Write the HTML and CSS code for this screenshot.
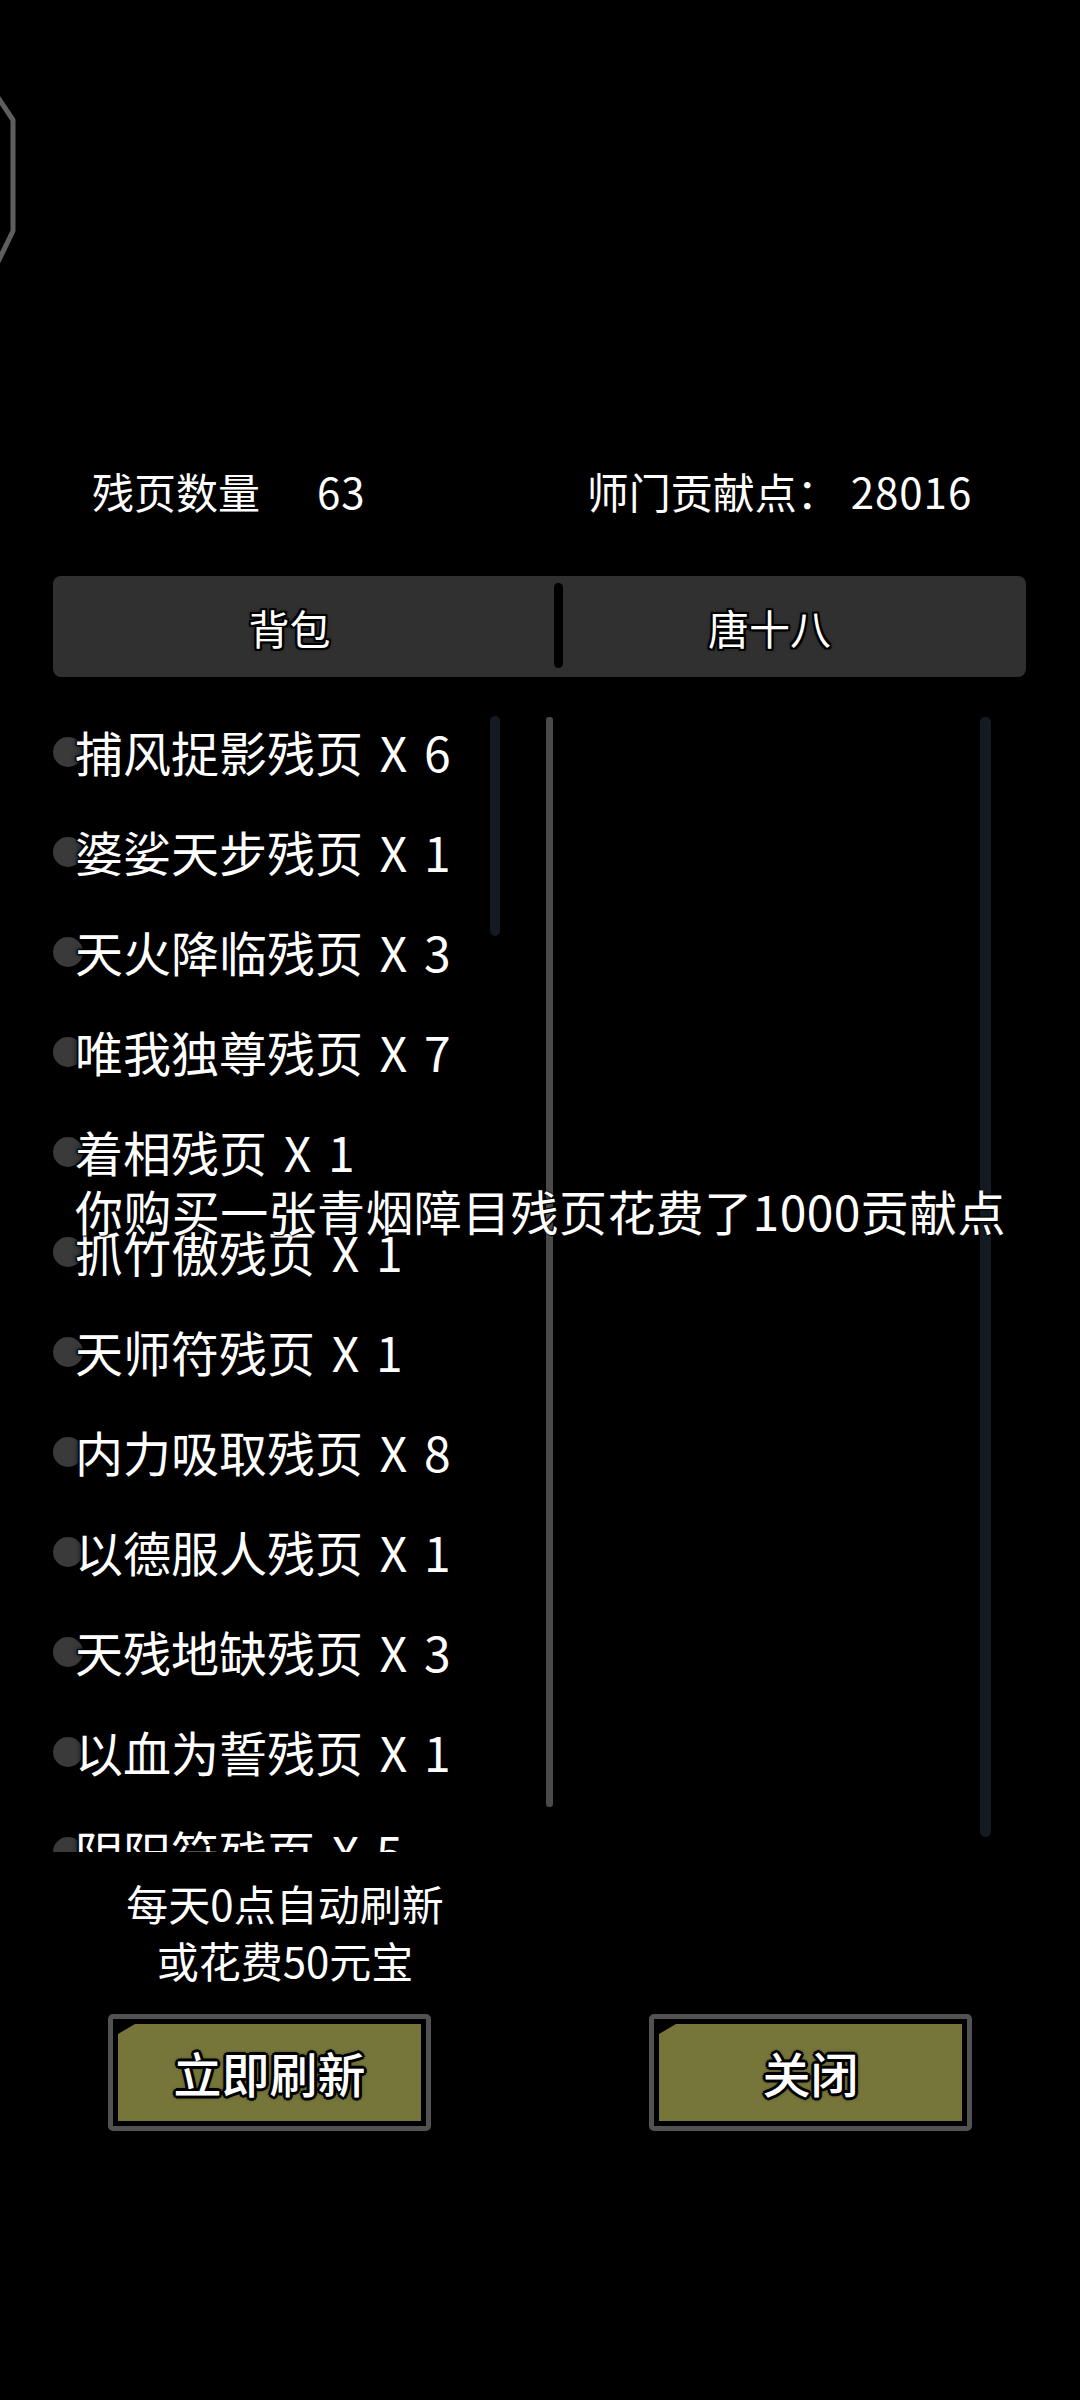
FILE: index.html
```html
<!DOCTYPE html>
<html lang="zh-CN">
<head>
<meta charset="utf-8">
<title>残页商店</title>
<link rel="stylesheet" href="styles.css">
</head>
<body>
<div class="screen">
  <svg class="deco" width="24" height="172" viewBox="0 0 24 172">
    <polyline points="-3,1 13,25 13,136 -3,169" fill="none" stroke="#5e5e5e" stroke-width="5" stroke-linejoin="round"/>
  </svg>

  <div class="stats">
    <span class="stat-label">残页数量</span>
    <span class="stat-value first">63</span>
    <span class="stat-label second">师门贡献点：</span>
    <span class="stat-value">28016</span>
  </div>

  <div class="tabs">
    <div class="tab tab-left"><span class="outline">背包</span></div>
    <div class="tab-divider"></div>
    <div class="tab tab-right"><span class="outline">唐十八</span></div>
  </div>

  <div class="panel">
    <div class="list">
      <div class="item"><span class="dot"></span><span class="name">捕风捉影残页 X 6</span></div>
      <div class="item"><span class="dot"></span><span class="name">婆娑天步残页 X 1</span></div>
      <div class="item"><span class="dot"></span><span class="name">天火降临残页 X 3</span></div>
      <div class="item"><span class="dot"></span><span class="name">唯我独尊残页 X 7</span></div>
      <div class="item"><span class="dot"></span><span class="name">着相残页 X 1</span></div>
      <div class="item"><span class="dot"></span><span class="name">抓竹傲残页 X 1</span></div>
      <div class="item"><span class="dot"></span><span class="name">天师符残页 X 1</span></div>
      <div class="item"><span class="dot"></span><span class="name">内力吸取残页 X 8</span></div>
      <div class="item"><span class="dot"></span><span class="name">以德服人残页 X 1</span></div>
      <div class="item"><span class="dot"></span><span class="name">天残地缺残页 X 3</span></div>
      <div class="item"><span class="dot"></span><span class="name">以血为誓残页 X 1</span></div>
      <div class="item"><span class="dot"></span><span class="name">阴阳符残页 X 5</span></div>
    </div>
    <div class="thumb"></div>
    <div class="separator"></div>
    <div class="right-pane"></div>
    <div class="track"></div>
  </div>

  <div class="info">
    <div>每天0点自动刷新</div>
    <div>或花费50元宝</div>
  </div>

  <div class="buttons">
    <div class="btn"><div class="btn-face"><span class="btn-text">立即刷新</span></div></div>
    <div class="btn"><div class="btn-face"><span class="btn-text">关闭</span></div></div>
  </div>

  <div class="toast">你购买一张青烟障目残页花费了1000贡献点</div>
</div>
</body>
</html>
```

FILE: styles.css
```css
html, body {
  margin: 0;
  padding: 0;
  background: #000;
}

.screen {
  position: relative;
  width: 1080px;
  height: 2400px;
  overflow: hidden;
  background: #000;
  color: #fff;
  font-family: "Noto Sans CJK SC", "Noto Sans", sans-serif;
}

.deco {
  display: block;
  margin-top: 95px;
}

/* stats row */
.stats {
  display: flex;
  align-items: center;
  margin-top: 199px;
  padding-left: 92px;
  height: 50px;
  line-height: 50px;
  font-size: 42px;
  text-shadow: 0 0 2px #000, 1px 1px 1px #000, -1px -1px 1px #000;
}

.stat-value.first {
  margin-left: 57px;
}

.stat-label.second {
  margin-left: 221px;
}

.stat-value {
  margin-left: 12px;
  letter-spacing: 1px;
}

/* tabs */
.tabs {
  display: flex;
  align-items: center;
  margin: 60px 0 0 53px;
  width: 973px;
  height: 101px;
  background: #303030;
  border-radius: 8px;
}

.tab {
  display: flex;
  align-items: center;
  justify-content: center;
  height: 100%;
  font-size: 41px;
}

.tab-left {
  width: 473px;
  padding-right: 28px;
}

.tab-right {
  width: 413px;
  padding-right: 50px;
}

.tab-divider {
  width: 9px;
  height: 85px;
  margin-top: -2px;
  background: #000;
  border-radius: 5px;
}

.outline {
  text-shadow:
    2px 0 0 #000, -2px 0 0 #000, 0 2px 0 #000, 0 -2px 0 #000,
    2px 2px 0 #000, -2px -2px 0 #000, 2px -2px 0 #000, -2px 2px 0 #000,
    0 0 4px #000;
}

/* panel */
.panel {
  display: flex;
  margin-top: 24px;
  height: 1151px;
}

.list {
  width: 435px;
  padding-left: 55px;
  height: 1151px;
  overflow: hidden;
}

.item {
  display: flex;
  align-items: center;
  height: 100px;
  white-space: nowrap;
}

.dot {
  flex: none;
  width: 30px;
  height: 30px;
  margin-top: 1px;
  margin-left: -2px;
  margin-right: -8px;
  border-radius: 15px;
  background: #3a3a3a;
}

.name {
  font-size: 48px;
  line-height: 100px;
  word-spacing: 6px;
  text-shadow:
    1px 1px 1px #000, -1px -1px 1px #000, 1px -1px 1px #000, -1px 1px 1px #000,
    0 0 4px #000, 0 0 6px rgba(0,0,0,0.8);
}

.thumb {
  flex: none;
  width: 10px;
  height: 220px;
  margin-top: 15px;
  border-radius: 5px;
  background: #141a22;
}

.separator {
  flex: none;
  width: 7px;
  height: 1090px;
  margin-top: 16px;
  margin-left: 46px;
  border-radius: 3px;
  background: #4a4a4a;
}

.right-pane {
  flex: none;
  width: 427px;
}

.track {
  flex: none;
  width: 11px;
  height: 1120px;
  margin-top: 16px;
  border-radius: 5px;
  background: #141a22;
}

/* info text */
.info {
  margin-top: 22px;
  width: 570px;
  text-align: center;
  font-size: 42px;
  line-height: 57px;
  text-shadow: 0 0 2px #000, 1px 1px 1px #000, -1px -1px 1px #000;
}

/* buttons */
.buttons {
  display: flex;
  margin: 26px 0 0 108px;
  gap: 218px;
}

.btn {
  box-sizing: border-box;
  width: 323px;
  height: 117px;
  padding: 5px;
  border: 5px solid #525252;
  border-radius: 5px;
  background: #000;
}

.btn-face {
  display: flex;
  align-items: center;
  justify-content: center;
  height: 100%;
  background: #76753a;
  clip-path: polygon(17px 0, 100% 0, 100% 100%, 0 100%, 0 10px);
}

.btn-text {
  font-size: 48px;
  font-weight: 500;
  margin-top: -2px;
  text-shadow:
    3px 0 0 #000, -3px 0 0 #000, 0 3px 0 #000, 0 -3px 0 #000,
    2px 2px 0 #000, -2px -2px 0 #000, 2px -2px 0 #000, -2px 2px 0 #000,
    0 0 5px #000;
}

/* toast overlay */
.toast {
  position: absolute;
  left: 75px;
  top: 1180px;
  font-size: 48px;
  line-height: 60px;
  letter-spacing: 0.4px;
  white-space: nowrap;
  text-shadow: 0 0 2px #000, 1px 1px 1px #000, -1px -1px 1px #000;
}
```
